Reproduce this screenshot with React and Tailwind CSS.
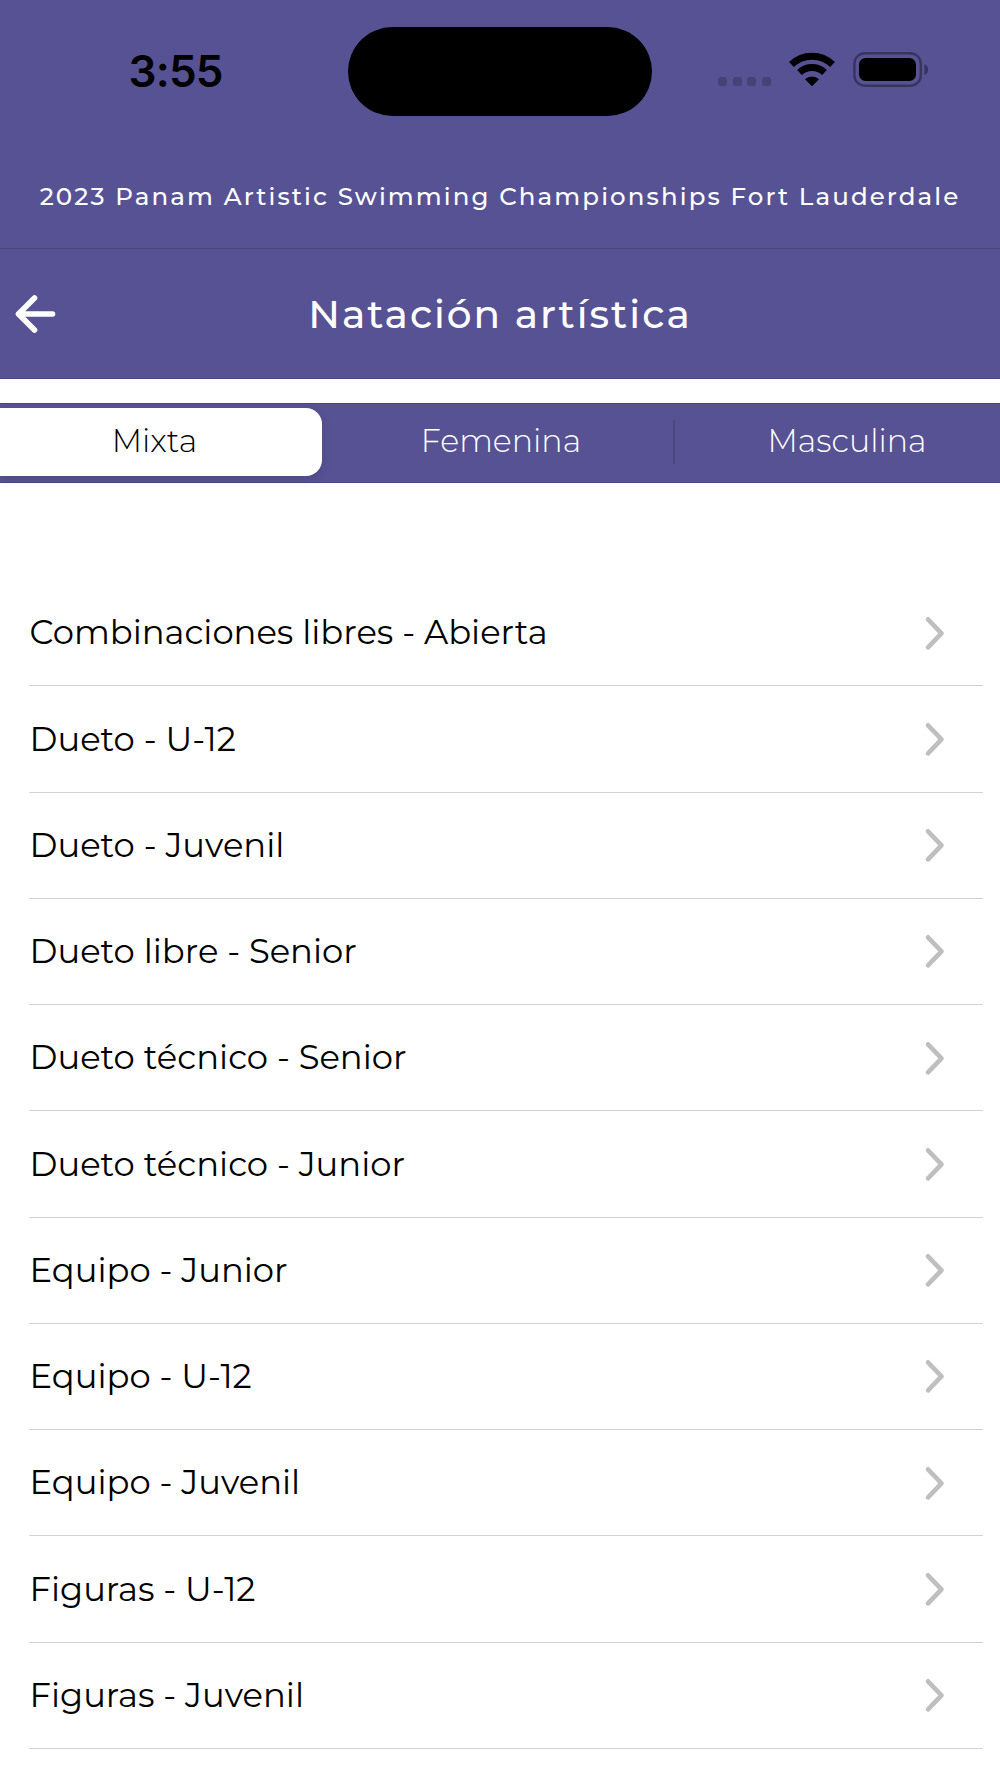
const events = [
  "Combinaciones libres - Abierta",
  "Dueto - U-12",
  "Dueto - Juvenil",
  "Dueto libre - Senior",
  "Dueto técnico - Senior",
  "Dueto técnico - Junior",
  "Equipo - Junior",
  "Equipo - U-12",
  "Equipo - Juvenil",
  "Figuras - U-12",
  "Figuras - Juvenil",
];

const StatusBar = () => (
  <div className="relative h-[143px]">
    <div className="absolute left-[128.5px] top-[43px] font-['Inter',sans-serif] text-[44px] leading-[56px] font-semibold tracking-[-0.8px] text-black">3:55</div>
    <div className="absolute left-[348px] top-[27px] h-[89px] w-[303.5px] rounded-full bg-black" />
    <div className="absolute left-[718px] top-[77px] flex gap-[5.6px]">
      {[0, 1, 2, 3].map((dot) => (
        <span key={dot} className="size-[9px] rounded-[3px] bg-[#464276]" />
      ))}
    </div>
    <svg className="absolute left-[788px] top-[51px]" width="48" height="37" viewBox="0 0 48 37">
      <path d="M3.5 13.5a29.5 29.5 0 0 1 41 0M11.5 21.5a18.3 18.3 0 0 1 25 0" fill="none" stroke="#000" strokeWidth="7" />
      <path d="M17 28.3a10.3 10.3 0 0 1 14 0L24 35.3Z" />
    </svg>
    <svg className="absolute left-[853px] top-[52px]" width="78" height="35" viewBox="0 0 78 35">
      <rect x="1.4" y="1.2" width="66.4" height="32.5" rx="10.5" fill="none" stroke="#38345d" strokeWidth="2.4" />
      <rect x="6" y="6" width="57" height="23" rx="6.5" />
      <path d="M71.4 12.3c5 1.6 5 9.2 0 10.8Z" fill="#38345d" />
    </svg>
  </div>
);

const EventRow = ({ name }) => (
  <li className="flex h-[106.25px] items-center justify-between border-b border-[#d2d2d2] pr-[37.5px] pl-[0.5px]">
    <span className="whitespace-nowrap text-[33.8px] font-normal">{name}</span>
    <svg width="22" height="36" viewBox="0 0 22 36" fill="none" stroke="#bfbfbf" strokeWidth="4.6" strokeLinecap="round" strokeLinejoin="round">
      <path d="M4 4.3L17.5 18.3L4 32.3" />
    </svg>
  </li>
);

export default function App() {
  return (
    <div className="h-[1778px] w-[1000px] overflow-hidden bg-white font-['Montserrat','Inter',sans-serif] text-black">
      <header className="h-[379px] border-b border-[#4b467f] bg-[#575293] text-white">
        <StatusBar />
        <div className="flex h-[106px] justify-center border-b border-[#4b467f] pt-[38px]">
          <h1 className="whitespace-nowrap text-[24.5px] leading-[30px] font-medium tracking-[2.1px]">
            2023 Panam Artistic Swimming Championships Fort Lauderdale
          </h1>
        </div>
        <div className="grid h-[129px] grid-cols-[100px_1fr_100px] items-center">
          <svg className="ml-[14px]" width="42" height="40" viewBox="0 0 42 40" fill="none" stroke="#fff" strokeWidth="5.6" strokeLinecap="round" strokeLinejoin="round">
            <path d="M38.5 20H4.5M20.5 4L4.5 20L20.5 36" />
          </svg>
          <h2 className="whitespace-nowrap text-center text-[39px] leading-[48px] font-medium tracking-[2px]">Natación artística</h2>
        </div>
      </header>

      <nav className="mt-6 flex h-20 items-center border-y border-[#4b467f] bg-[#575293] text-[31.7px] font-[350] text-white">
        <button className="mb-[2px] h-[68px] w-[322px] rounded-r-2xl bg-white pr-[13px] pb-[2px] text-black shadow-[0_3px_10px_rgba(0,0,0,0.12)]">
          Mixta
        </button>
        <button className="h-full w-[351px] pb-[4px] pl-[7px]">Femenina</button>
        <div className="mb-[2px] h-11 w-[2px] bg-[#4c477f]" />
        <button className="h-full flex-1 pb-[4px] pl-[19px]">Masculina</button>
      </nav>

      <ul className="mt-[97px] mr-[17px] ml-[29px]">
        {events.map((event) => (
          <EventRow key={event} name={event} />
        ))}
      </ul>
    </div>
  );
}
